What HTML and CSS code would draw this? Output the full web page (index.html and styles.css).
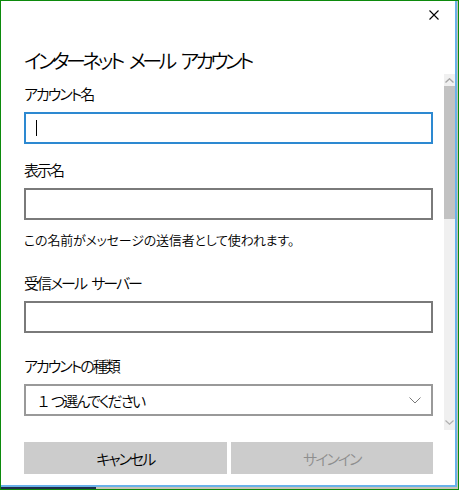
FILE: index.html
```html
<!DOCTYPE html>
<html lang="ja">
<head>
<meta charset="utf-8">
<link rel="stylesheet" href="styles.css">
</head>
<body>
<div class="frame">
  <div class="dialog">
    <div class="content">
      <div class="topbar">
        <button class="close" aria-label="閉じる">
          <svg width="10" height="10" viewBox="0 0 10 10"><path d="M0.5 0.5L9.5 9.5M9.5 0.5L0.5 9.5" stroke="#000" stroke-width="1.1" fill="none"/></svg>
        </button>
      </div>
      <h1 class="title">インターネット メール アカウント</h1>
      <div class="field first">
        <div class="label">アカウント名</div>
        <div class="input focused"><span class="caret"></span></div>
      </div>
      <div class="field">
        <div class="label">表示名</div>
        <div class="input"></div>
        <div class="help">この名前がメッセージの送信者として使われます。</div>
      </div>
      <div class="field server">
        <div class="label">受信メール サーバー</div>
        <div class="input"></div>
      </div>
      <div class="field type">
        <div class="label">アカウントの種類</div>
        <div class="select">
          <span class="sel-text"><span class="fw">１</span>つ選んでください</span>
          <svg width="12" height="7" viewBox="0 0 12 7"><path d="M0.5 0.5L6 6L11.5 0.5" stroke="#7a7a7a" stroke-width="1" fill="none"/></svg>
        </div>
      </div>
      <div class="buttons">
        <div class="btn">キャンセル</div>
        <div class="btn disabled">サインイン</div>
      </div>
    </div>
    <div class="scrollbar">
      <div class="sb-arrow">
        <svg width="9" height="5" viewBox="0 0 9 5"><path d="M0.5 4.5L4.5 0.8L8.5 4.5" stroke="#a6a6a6" stroke-width="1.4" fill="none"/></svg>
      </div>
      <div class="sb-thumb"></div>
      <div class="sb-track"></div>
      <div class="sb-arrow down">
        <svg width="9" height="5" viewBox="0 0 9 5"><path d="M0.5 0.5L4.5 4.2L8.5 0.5" stroke="#b0b0b0" stroke-width="1.2" fill="none"/></svg>
      </div>
    </div>
  </div>
</div>
</body>
</html>
```
FILE: styles.css
```css
* { box-sizing: border-box; }
html, body { margin: 0; padding: 0; }
body {
  width: 459px;
  height: 490px;
  overflow: hidden;
  font-family: "Noto Sans CJK JP", "Noto Sans", sans-serif;
  font-feature-settings: "palt";
  font-weight: 350;
  color: #000;
}
.frame {
  width: 459px;
  height: 490px;
  border: 1px solid #0c8a0c;
  background: linear-gradient(to right, #1f2d4a 0, #1f2d4a 95px, #c9c3b6 95px);
  padding: 0 1px 2px 0;
}
.dialog {
  width: 456px;
  height: 486px;
  background: #fff;
  border-right: 2px solid #69b2ea;
  border-bottom: 2px solid #69b2ea;
  display: flex;
}
.content {
  flex: 1;
  display: flex;
  flex-direction: column;
  padding: 0 11px 0 23px;
}
.topbar {
  height: 46px;
  display: flex;
  justify-content: flex-end;
  align-items: flex-start;
}
.close {
  margin: 9px -6px 0 0;
  padding: 0;
  width: 10px;
  height: 10px;
  border: 0;
  background: none;
  display: flex;
}
.title {
  margin: 0;
  font-size: 20px;
  font-weight: 350;
  letter-spacing: -3.6px;
  word-spacing: 6px;
  line-height: 28px;
  height: 28px;
}
.field { display: flex; flex-direction: column; }
.field.first { margin-top: 9px; }
.field + .field { margin-top: 16px; }
.field.server { margin-top: 24px; }
.field.type { margin-top: 23px; }
.label {
  font-size: 15px;
  letter-spacing: -2px;
  word-spacing: 4px;
  line-height: 20px;
  height: 20px;
  margin-bottom: 8px;
}
.input {
  height: 32px;
  border: 2px solid #7a7a7a;
  display: flex;
  align-items: center;
  padding-left: 10px;
}
.input.focused { border-color: #2d89d1; }
.caret {
  width: 1px;
  height: 16px;
  background: #000;
}
.help {
  margin-top: 11px;
  font-size: 13px;
  line-height: 18px;
  letter-spacing: -0.2px;
}
.select {
  height: 32px;
  border: 2px solid #999;
  display: flex;
  align-items: center;
  justify-content: space-between;
  padding: 0 10px 0 10px;
  font-size: 15px;
}
.sel-text { letter-spacing: -2px; }
.fw { font-feature-settings: normal; letter-spacing: 0; }
.buttons {
  margin-top: 26px;
  display: grid;
  grid-template-columns: 1fr 1fr;
  gap: 4px;
}
.btn {
  height: 32px;
  background: #cccccc;
  display: flex;
  align-items: center;
  justify-content: center;
  font-size: 15px;
  letter-spacing: -2px;
}
.btn.disabled { color: #8e8e8e; }
.scrollbar {
  width: 11px;
  margin-top: 73px;
  height: 356px;
  display: flex;
  flex-direction: column;
  background: #f0f0f0;
}
.sb-arrow {
  height: 12px;
  display: flex;
  align-items: center;
  justify-content: center;
}
.sb-thumb {
  height: 133px;
  background: #c2c2c2;
}
.sb-track { flex: 1; }
.sb-arrow.down { height: 14px; margin-bottom: 1px; }
```
